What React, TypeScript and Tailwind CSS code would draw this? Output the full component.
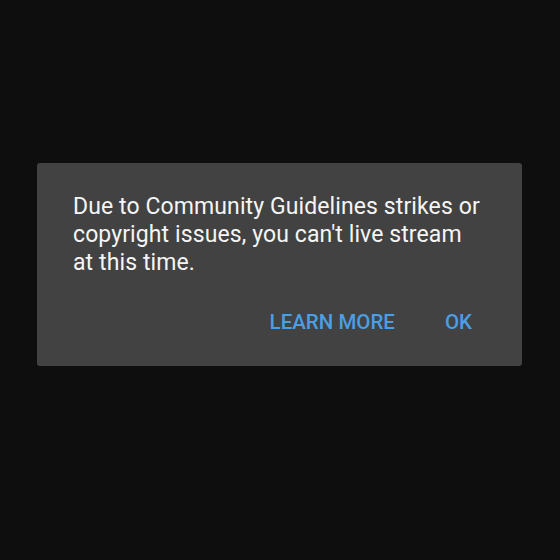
export default function App() {
  return (
    <div className="w-[560px] h-[560px] bg-[#0e0e0e] pt-[163px] pl-[37px]" style={{ fontFamily: 'Roboto, "Noto Sans", sans-serif' }}>
      <div className="w-[485px] h-[203px] bg-[#424242] rounded-[3px] pt-[30px] pl-[36px] flex flex-col">
        <p className="text-[23px] tracking-[0.1px] leading-[28px] text-[#f5f5f5]">
          Due to Community Guidelines strikes or
          <br />
          copyright issues, you can't live stream
          <br />
          at this time.
        </p>
        <div className="flex justify-end items-center gap-[50px] mt-[30px] pr-[50px]">
          <button className="text-[20.5px] font-medium text-[#4a9ee3] uppercase">Learn more</button>
          <button className="text-[20.5px] font-medium text-[#4a9ee3] uppercase">OK</button>
        </div>
      </div>
    </div>
  );
}
